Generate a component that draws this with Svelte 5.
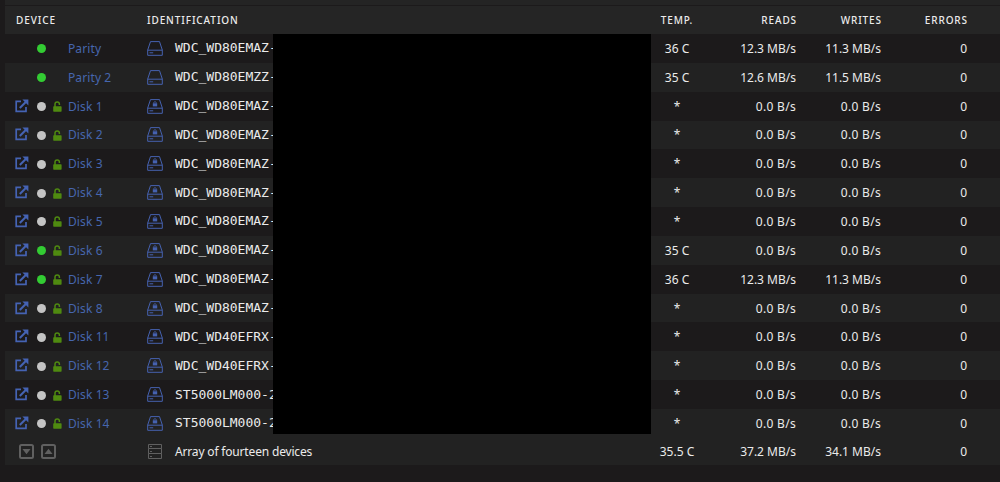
<script>
	const wd80 = "WDC_WD80EMAZ-";
	const wd40 = "WDC_WD40EFRX-";
	const st50 = "ST5000LM000-2";

	const disk = (name, id, temp = "*", reads = "0.0 B/s", writes = "0.0 B/s") => ({
		name, id, temp, reads, writes, active: temp !== "*", locked: true
	});

	const devices = [
		{ name: "Parity", id: wd80, temp: "36 C", reads: "12.3 MB/s", writes: "11.3 MB/s", active: true, locked: false },
		{ name: "Parity 2", id: "WDC_WD80EMZZ-", temp: "35 C", reads: "12.6 MB/s", writes: "11.5 MB/s", active: true, locked: false },
		disk("Disk 1", wd80),
		disk("Disk 2", wd80),
		disk("Disk 3", wd80),
		disk("Disk 4", wd80),
		disk("Disk 5", wd80),
		disk("Disk 6", wd80, "35 C"),
		disk("Disk 7", wd80, "36 C", "12.3 MB/s", "11.3 MB/s"),
		disk("Disk 8", wd80),
		disk("Disk 11", wd40),
		disk("Disk 12", wd40),
		disk("Disk 13", st50),
		disk("Disk 14", st50)
	];
</script>

<main>
	<div class="strip"></div>
	<div class="row head">
		<span class="device">DEVICE</span>
		<span>IDENTIFICATION</span>
		<span class="temp">TEMP.</span>
		<span class="num">READS</span>
		<span class="num">WRITES</span>
		<span class="num">ERRORS</span>
	</div>

	<div class="body">
		{#each devices as d}
		<div class="row">
			<div class="device">
				<span class="slot browse">
					{#if d.locked}
					<svg width="14" height="14" viewBox="0 0 14 14">
						<path d="M6 2.3H1.2V12.4H11V8" fill="none" stroke="currentColor" stroke-width="1.7" />
						<path d="M4.8 9L11.3 2.5" fill="none" stroke="currentColor" stroke-width="2" />
						<path d="M7.4 .4H13.4V6.4Z" fill="currentColor" />
					</svg>
					{/if}
				</span>
				<span class="slot orb"><i class:active={d.active}></i></span>
				<span class="slot lock">
					{#if d.locked}
					<svg width="9" height="11" viewBox="0 0 9 11">
						<path d="M2 6V3.1A2.2 2.2 0 0 1 6.4 3.1V4" fill="none" stroke="currentColor" stroke-width="1.5" />
						<path d="M.9 5.2H7.9Q8.6 5.2 8.6 5.9V10Q8.6 10.8 7.9 10.8H.9Q.2 10.8 .2 10V5.9Q.2 5.2 .9 5.2Z" fill="currentColor" />
					</svg>
					{/if}
				</span>
				<span class="name">{d.name}</span>
			</div>
			<div class="ident">
				<svg class="drive" width="16" height="15" viewBox="0 0 16 15">
					<path d="M3.5 .6H12.5L15.3 9V14.3H.7V9ZM.9 9.2H15.1M2.5 11.8H6.2" fill="none" stroke="currentColor" />
					{#if d.locked}
					<path d="M5.8 4.3H10.2V7.4H5.8Z" fill="currentColor" />
					<path d="M6.8 4.5V3.3Q8 2 9.2 3.3V4.5" fill="none" stroke="currentColor" stroke-width=".8" />
					{/if}
				</svg>
				<span class="mono">{d.id}</span>
			</div>
			<span class="temp">{d.temp}</span>
			<span class="num" class:idle={d.reads === "0.0 B/s"}>{d.reads}</span>
			<span class="num" class:idle={d.writes === "0.0 B/s"}>{d.writes}</span>
			<span class="num">0</span>
		</div>
		{/each}
		<!-- hides the serial numbers -->
		<div class="cover"></div>
	</div>

	<div class="row total">
		<div class="device sort">
			<svg width="15" height="15" viewBox="0 0 15 15">
				<rect x="1" y="1" width="13" height="13" rx="1.5" fill="none" stroke="currentColor" stroke-width="2" />
				<path d="M3.5 5H11.5L7.5 10.2Z" fill="currentColor" />
			</svg>
			<svg width="15" height="15" viewBox="0 0 15 15">
				<rect x="1" y="1" width="13" height="13" rx="1.5" fill="none" stroke="currentColor" stroke-width="2" />
				<path d="M3.5 10H11.5L7.5 4.8Z" fill="currentColor" />
			</svg>
		</div>
		<div class="ident">
			<svg class="server" width="16" height="15" viewBox="0 0 16 15">
				<path d="M1.5 .5H14.5V4.5H1.5ZM1.5 4.5V9.5H14.5V4.5M1.5 9.5V14.5H14.5V9.5M3 2.5H5M3 7.5H5M3 12.5H5" fill="none" stroke="currentColor" />
			</svg>
			<span class="array">Array of fourteen devices</span>
		</div>
		<span class="temp">35.5 C</span>
		<span class="num">37.2 MB/s</span>
		<span class="num">34.1 MB/s</span>
		<span class="num">0</span>
	</div>
</main>

<style>
	:global(body) {
		background: #1c1a1b;
	}
	main {
		box-sizing: border-box;
		height: 482px;
		padding-left: 5px;
		overflow: hidden;
		font-family: "Noto Sans", sans-serif;
		font-size: 12px;
		color: #ebebeb;
	}
	.strip {
		height: 5px;
		margin-bottom: 1px;
		background: #242424;
	}
	.row {
		display: grid;
		grid-template-columns: 142px 488px 84px 77px 85px 86px;
		align-items: center;
		height: 28.85px;
		line-height: 16px;
		white-space: nowrap;
	}
	.body {
		position: relative;
	}
	.body .row:nth-child(even),
	.total {
		background: #222;
	}
	.row.head {
		height: 28px;
		background: #252525;
		font-size: 10px;
		letter-spacing: .9px;
		font-weight: 500;
	}
	.head .device {
		padding-left: 11px;
	}
	.head .num {
		margin-right: -1px;
	}
	.row.total {
		height: 27.5px;
	}
	.device,
	.ident {
		display: flex;
		align-items: center;
	}
	.slot {
		display: flex;
		flex: none;
	}
	.browse {
		width: 22px;
		padding-left: 10px;
		padding-bottom: 1px;
		color: #4563b4;
	}
	.orb {
		width: 16px;
		padding-top: 1px;
	}
	.orb i {
		width: 9px;
		height: 9px;
		border-radius: 50%;
		background: #c4c4c4;
	}
	.orb i.active {
		background: #33cc33;
	}
	.lock {
		width: 15px;
		padding-top: 1px;
		color: #4f8a10;
	}
	.name {
		padding-top: 1px;
		color: #4666ae;
		letter-spacing: .1px;
	}
	.drive {
		width: 16px;
		margin-right: 12px;
		color: #4662b0;
	}
	.server {
		margin-right: 12px;
		color: #606060;
	}
	.mono {
		font-family: "DejaVu Sans Mono", monospace;
		font-size: 13px;
	}
	.array {
		letter-spacing: -.17px;
	}
	.temp {
		text-align: center;
	}
	.body .temp,
	.body .num,
	.total .temp,
	.total .num {
		padding-top: 1px;
	}
	.num {
		text-align: right;
	}
	.idle {
		letter-spacing: .3px;
	}
	.sort {
		gap: 7px;
		padding-left: 14px;
		color: #606060;
	}
	.cover {
		position: absolute;
		top: 0;
		left: 268px;
		width: 378px;
		height: 400px;
		background: #000;
	}
</style>
